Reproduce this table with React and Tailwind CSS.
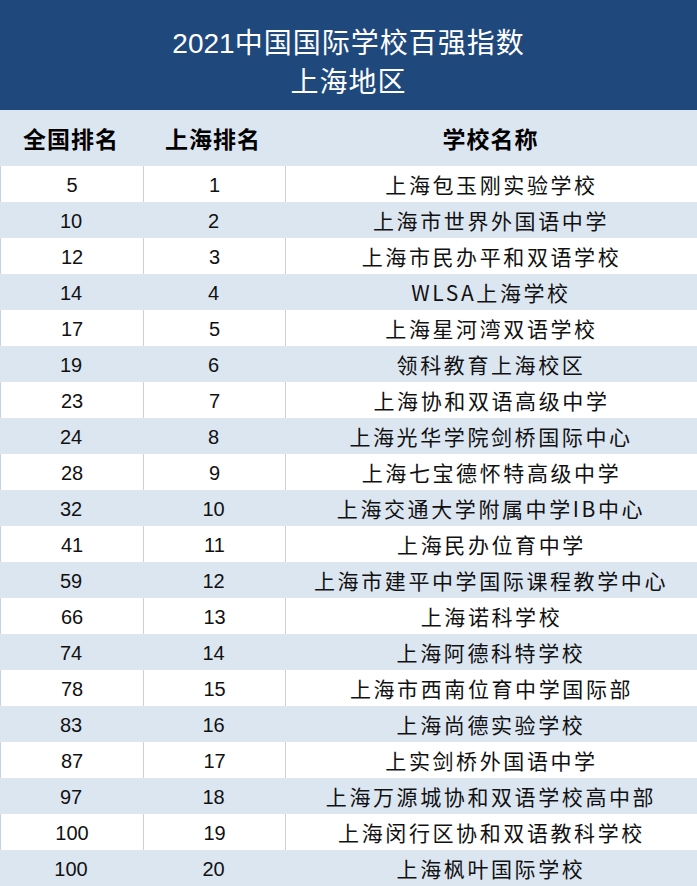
const schools = [
  [5, 1, "上海包玉刚实验学校"],
  [10, 2, "上海市世界外国语中学"],
  [12, 3, "上海市民办平和双语学校"],
  [14, 4, "WLSA上海学校"],
  [17, 5, "上海星河湾双语学校"],
  [19, 6, "领科教育上海校区"],
  [23, 7, "上海协和双语高级中学"],
  [24, 8, "上海光华学院剑桥国际中心"],
  [28, 9, "上海七宝德怀特高级中学"],
  [32, 10, "上海交通大学附属中学IB中心"],
  [41, 11, "上海民办位育中学"],
  [59, 12, "上海市建平中学国际课程教学中心"],
  [66, 13, "上海诺科学校"],
  [74, 14, "上海阿德科特学校"],
  [78, 15, "上海市西南位育中学国际部"],
  [83, 16, "上海尚德实验学校"],
  [87, 17, "上实剑桥外国语中学"],
  [97, 18, "上海万源城协和双语学校高中部"],
  [100, 19, "上海闵行区协和双语教科学校"],
  [100, 20, "上海枫叶国际学校"],
];

export default function App() {
  return (
    <div className="w-[697px] h-[886px] overflow-hidden bg-white font-['Noto_Sans_CJK_SC',sans-serif]">
      {/* title band */}
      <div className="h-[110px] bg-[#1f497d] flex flex-col items-center justify-center text-white text-[28px] leading-[36px] tracking-[1px] pt-[10px]">
        <div>
          <span className="font-['Liberation_Sans',sans-serif] tracking-[0px]">2021</span>
          中国国际学校百强指数
        </div>
        <div>上海地区</div>
      </div>

      {/* column headings */}
      <div className="grid grid-cols-[142px_142px_1fr] h-[56px] bg-[#dce6f1] text-black font-bold text-[23px] tracking-[1px]">
        <div className="flex items-center justify-center">全国排名</div>
        <div className="flex items-center justify-center">上海排名</div>
        <div className="flex items-center justify-center">学校名称</div>
      </div>

      {schools.map(([nat, sh, name], i) => {
        const white = i % 2 === 0;
        return (
          <div
            key={sh}
            className={`grid grid-cols-[142px_142px_1fr] h-[36px] text-[#111] ${
              white ? "bg-white border-l border-[#c6d2e4]" : "bg-[#dce6f1]"
            }`}
          >
            <div className="flex items-center justify-center pt-[1px] font-['Liberation_Sans',sans-serif] text-[20px]">
              {nat}
            </div>
            <div
              className={`flex items-center justify-center pt-[1px] font-['Liberation_Sans',sans-serif] text-[20px] border-l ${
                white ? "border-[#c6d2e4]" : "border-transparent"
              }`}
            >
              {sh}
            </div>
            <div
              className={`flex items-center justify-center pt-[1px] text-[21px] tracking-[2.6px] border-l ${
                white ? "border-[#c6d2e4]" : "border-transparent"
              }`}
            >
              {name}
            </div>
          </div>
        );
      })}
    </div>
  );
}
